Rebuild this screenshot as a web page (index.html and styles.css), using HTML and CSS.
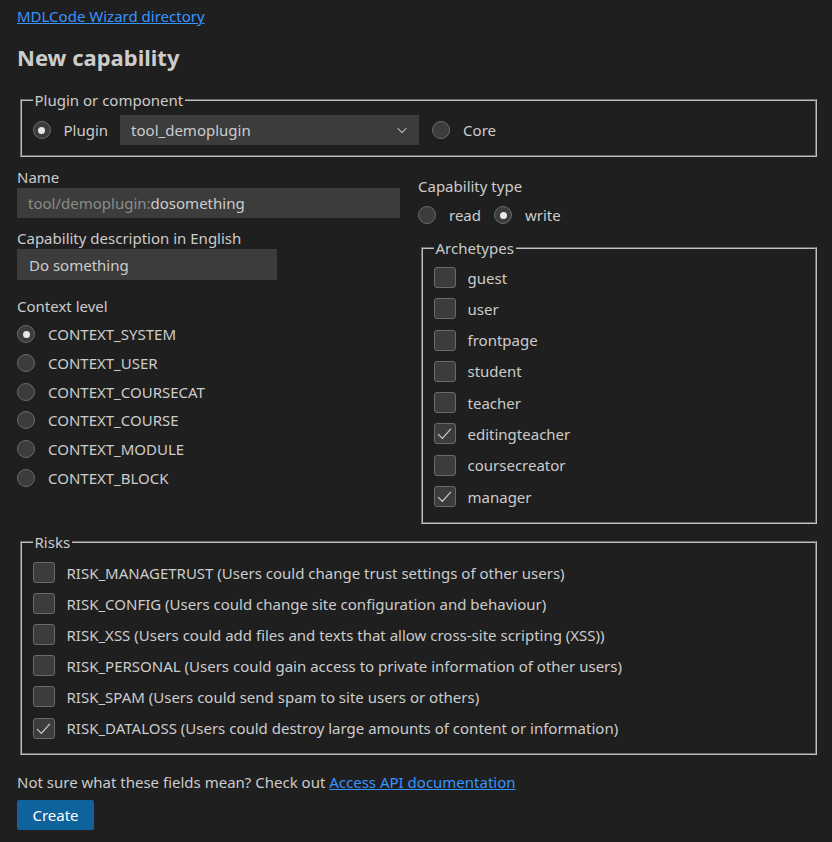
FILE: index.html
```html
<!DOCTYPE html>
<html lang="en">
<head>
<meta charset="utf-8">
<title>New capability</title>
<link rel="stylesheet" href="styles.css">
</head>
<body>
<a class="dir-link" href="#">MDLCode Wizard directory</a>
<h1 class="title">New capability</h1>

<fieldset class="group group-component">
  <legend>Plugin or component</legend>
  <div class="inline-row">
    <label class="radio"><span class="radio-dot checked"></span><span>Plugin</span></label>
    <div class="select">
      <span>tool_demoplugin</span>
      <svg class="chevron" width="14" height="14" viewBox="0 0 16 16"><path d="M3 6l5 5 5-5" fill="none" stroke="#cccccc" stroke-width="1.2"/></svg>
    </div>
    <label class="radio"><span class="radio-dot"></span><span>Core</span></label>
  </div>
</fieldset>

<div class="columns">
  <div class="col-left">
    <div class="field-label">Name</div>
    <div class="text-input name-input"><span class="prefix">tool/demoplugin:</span><span>dosomething</span></div>
    <div class="field-label">Capability description in English</div>
    <div class="text-input desc-input"><span>Do something</span></div>
    <div class="field-label context-label">Context level</div>
    <div class="radio-list">
      <label class="radio"><span class="radio-dot checked"></span><span>CONTEXT_SYSTEM</span></label>
      <label class="radio"><span class="radio-dot"></span><span>CONTEXT_USER</span></label>
      <label class="radio"><span class="radio-dot"></span><span>CONTEXT_COURSECAT</span></label>
      <label class="radio"><span class="radio-dot"></span><span>CONTEXT_COURSE</span></label>
      <label class="radio"><span class="radio-dot"></span><span>CONTEXT_MODULE</span></label>
      <label class="radio"><span class="radio-dot"></span><span>CONTEXT_BLOCK</span></label>
    </div>
  </div>
  <div class="col-right">
    <div class="field-label">Capability type</div>
    <div class="type-row">
      <label class="radio"><span class="radio-dot"></span><span>read</span></label>
      <label class="radio"><span class="radio-dot checked"></span><span>write</span></label>
    </div>
    <fieldset class="group group-archetypes">
      <legend>Archetypes</legend>
      <div class="check-list">
        <label class="check"><span class="box"></span><span>guest</span></label>
        <label class="check"><span class="box"></span><span>user</span></label>
        <label class="check"><span class="box"></span><span>frontpage</span></label>
        <label class="check"><span class="box"></span><span>student</span></label>
        <label class="check"><span class="box"></span><span>teacher</span></label>
        <label class="check"><span class="box"><svg class="tick" viewBox="0 0 16 16" width="17" height="17"><path d="M2 8.6l4 4 8-9" fill="none" stroke="#d0d0d0" stroke-width="1.1"/></svg></span><span>editingteacher</span></label>
        <label class="check"><span class="box"></span><span>coursecreator</span></label>
        <label class="check"><span class="box"><svg class="tick" viewBox="0 0 16 16" width="17" height="17"><path d="M2 8.6l4 4 8-9" fill="none" stroke="#d0d0d0" stroke-width="1.1"/></svg></span><span>manager</span></label>
      </div>
    </fieldset>
  </div>
</div>

<fieldset class="group group-risks">
  <legend>Risks</legend>
  <div class="check-list">
    <label class="check"><span class="box"></span><span>RISK_MANAGETRUST (Users could change trust settings of other users)</span></label>
    <label class="check"><span class="box"></span><span>RISK_CONFIG (Users could change site configuration and behaviour)</span></label>
    <label class="check"><span class="box"></span><span>RISK_XSS (Users could add files and texts that allow cross-site scripting (XSS))</span></label>
    <label class="check"><span class="box"></span><span>RISK_PERSONAL (Users could gain access to private information of other users)</span></label>
    <label class="check"><span class="box"></span><span>RISK_SPAM (Users could send spam to site users or others)</span></label>
    <label class="check"><span class="box"><svg class="tick" viewBox="0 0 16 16" width="17" height="17"><path d="M2 8.6l4 4 8-9" fill="none" stroke="#d0d0d0" stroke-width="1.1"/></svg></span><span>RISK_DATALOSS (Users could destroy large amounts of content or information)</span></label>
  </div>
</fieldset>

<p class="help">Not sure what these fields mean? Check out <a href="#">Access API documentation</a></p>
<button class="btn-create" type="button">Create</button>
</body>
</html>
```

FILE: styles.css
```css
html, body {
  background: #1f1f1f;
}
body {
  margin: 0;
  padding: 6px 12px 0 17px;
  color: #cccccc;
  font-family: "Noto Sans", "DejaVu Sans", sans-serif;
  font-size: 15px;
  line-height: 20px;
}
a {
  color: #3794ff;
  text-decoration: underline;
}
.dir-link {
  display: block;
  width: max-content;
}
.title {
  margin: 16px 0 18px;
  font-size: 22px;
  line-height: 30px;
  font-weight: 700;
  color: #cccccc;
}
.group {
  margin: 0 3px;
  padding: 5px 10.5px 10px;
  border: 2px groove #c0c0c0;
  min-width: 0;
}
.group legend {
  padding: 0 2px;
  line-height: 20px;
}
.inline-row {
  display: flex;
  align-items: center;
}
.radio {
  display: flex;
  align-items: center;
  gap: 13px;
}
.radio-dot {
  width: 18px;
  height: 18px;
  box-sizing: border-box;
  border-radius: 50%;
  border: 1px solid #6a6a6a;
  background: #3c3c3c;
  display: flex;
  align-items: center;
  justify-content: center;
  flex: none;
}
.radio-dot.checked::after {
  content: "";
  width: 7px;
  height: 7px;
  border-radius: 50%;
  background: #e8e8e8;
}
.select {
  width: 299px;
  height: 30px;
  box-sizing: border-box;
  margin: 0 13px 0 12px;
  padding: 0 10px 0 11px;
  background: #3c3c3c;
  display: flex;
  align-items: center;
  justify-content: space-between;
}
.chevron {
  flex: none;
}
.columns {
  display: grid;
  grid-template-columns: 401px 1fr;
  align-items: start;
}
.col-left {
  padding-top: 10px;
}
.col-right {
  padding-top: 19px;
}
.field-label {
  line-height: 20px;
}
.text-input {
  height: 30px;
  box-sizing: border-box;
  margin: 1px 0 10px;
  padding: 0 11px;
  background: #3c3c3c;
  display: flex;
  align-items: center;
}
.name-input {
  width: 383px;
}
.desc-input {
  width: 260px;
  padding-left: 12px;
  height: 31px;
}
.prefix {
  color: #8b8b8b;
}
.context-label {
  margin-top: 16px;
}
.radio-list {
  margin-top: 8px;
  display: flex;
  flex-direction: column;
  gap: 8.8px;
}
.type-row {
  display: flex;
  gap: 13px;
  margin-top: 9px;
  margin-bottom: 13px;
}
.group-archetypes {
  padding: 9px 10.5px 15px;
}
.group-archetypes .check-list {
  gap: 10.3px;
}
.group-risks {
  margin-top: 8px;
  padding: 10px 10.5px 14px;
}
.check-list {
  display: flex;
  flex-direction: column;
  gap: 10.1px;
}
.check {
  display: flex;
  align-items: center;
  gap: 12px;
}
.box {
  width: 22px;
  height: 21px;
  box-sizing: border-box;
  border: 1px solid #6a6a6a;
  border-radius: 3px;
  background: #3c3c3c;
  display: flex;
  align-items: center;
  justify-content: center;
  flex: none;
}
.help {
  margin: 17px 0 8px;
}
.btn-create {
  height: 30px;
  width: 77px;
  border: none;
  border-radius: 2px;
  background: #0e639c;
  color: #ffffff;
  font-family: inherit;
  font-size: 15px;
  padding: 0;
}
```
